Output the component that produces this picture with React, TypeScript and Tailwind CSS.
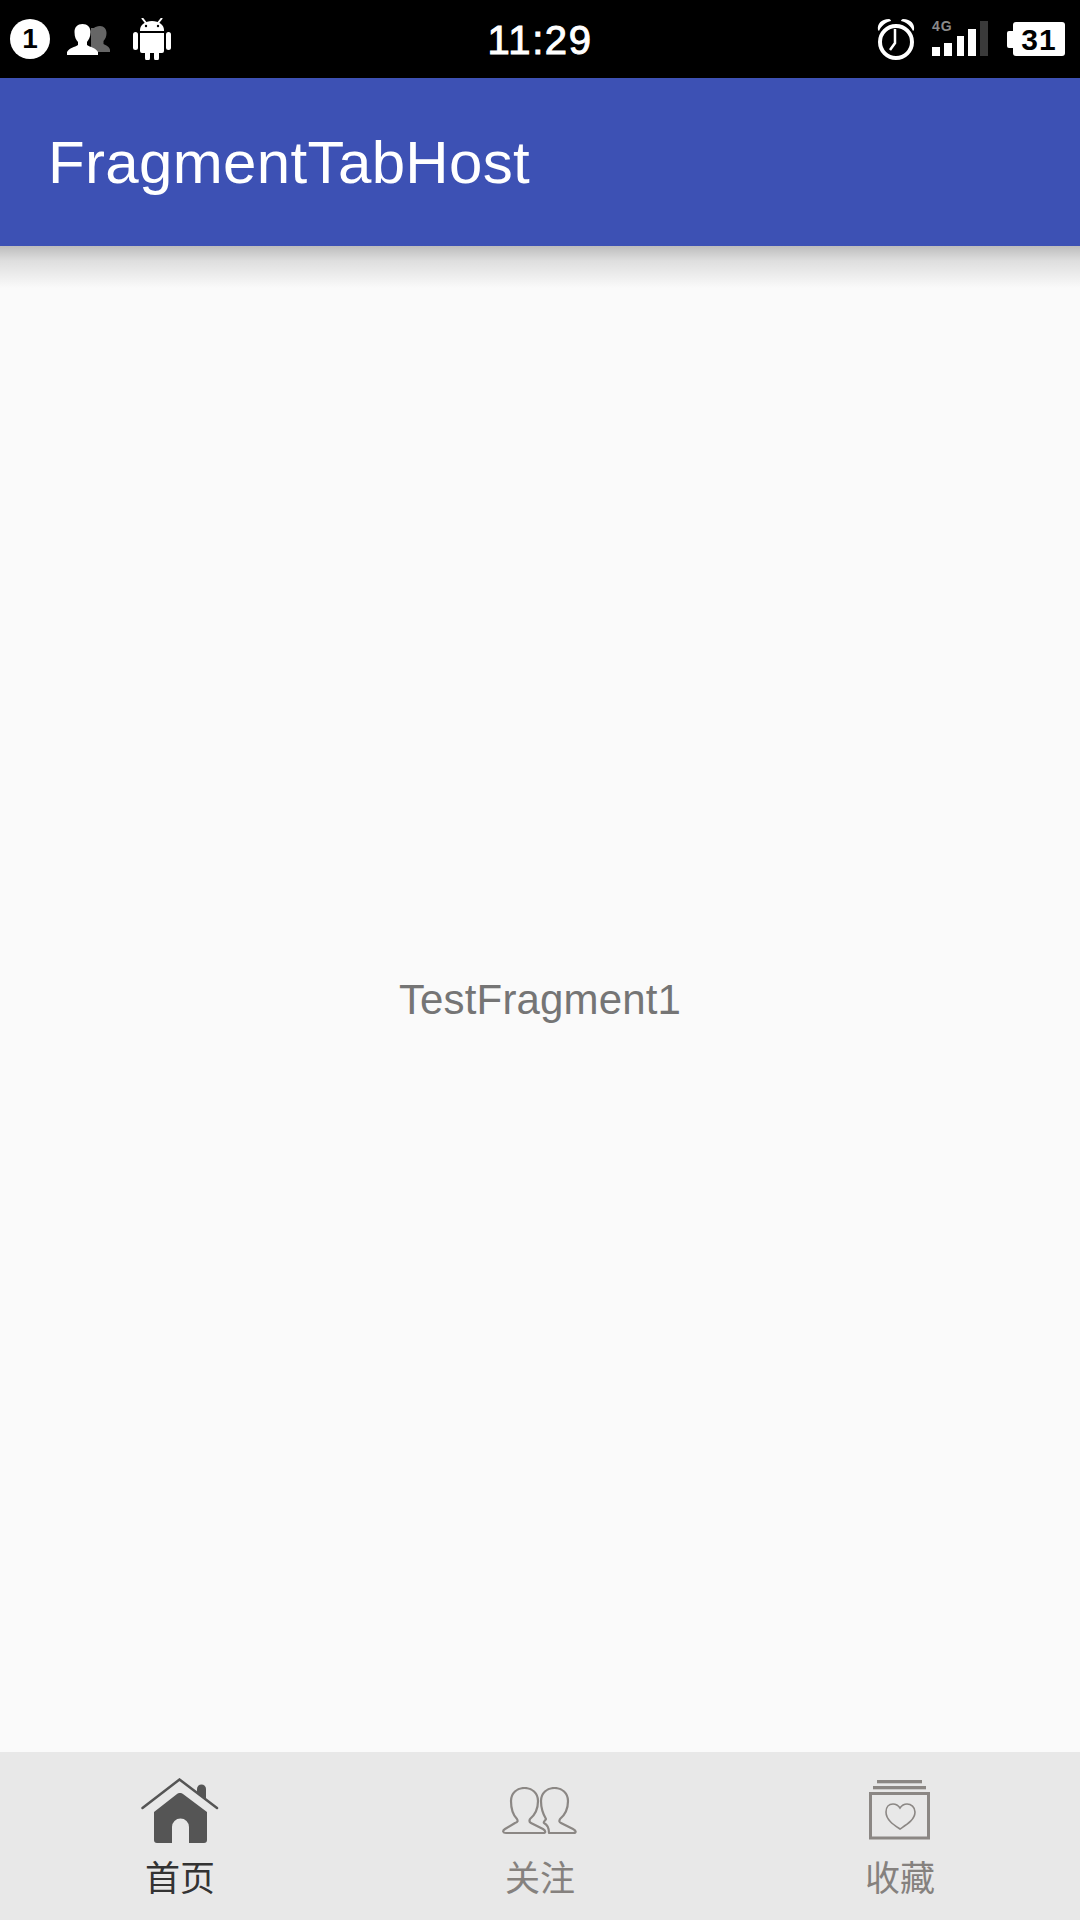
const sans = "font-['Liberation_Sans',Arial,sans-serif]";
const cjk = "font-['Noto_Sans_CJK_SC','Noto_Sans_CJK_JP',sans-serif]";

function People() {
  return (
    <svg width="44" height="32" viewBox="0 0 44 32">
      <path fill="#666" d="M33 3c4 0 6.500 3 6.500 7 0 3-1 6-3 8v3c2 1 6.500 3 6.500 6v2H24V5h3c1-1 3-2 6-2z" />
      <path fill="#fff" d="M15.500 1c5 0 8 3 8 8 0 5-2 8-3.500 10v3c3 2 9 3 11 7v3H0v-3c2-4 8-5 11-7v-3c-2-2-3.500-5-3.500-10 0-5 3-8 8-8z" />
    </svg>
  );
}

function Android() {
  return (
    <svg width="38" height="42" viewBox="0 0 38 42">
      <path stroke="#fff" strokeWidth="2" d="M9 0l4 5M29 0l-4 5" />
      <path fill="#fff" d="M7 12C7 7 12 3 19 3s12 4 12 9v1H7z" />
      <circle cx="13" cy="8" r="1.200" fill="#000" />
      <circle cx="25" cy="8" r="1.200" fill="#000" />
      <path fill="#fff" d="M7 15h24v18a2 2 0 0 1-2 2h-3v5a2.500 2.500 0 0 1-5 0v-5h-4v5a2.500 2.500 0 0 1-5 0v-5H9a2 2 0 0 1-2-2z" />
      <rect x="0" y="14" width="5" height="18" rx="2.500" fill="#fff" />
      <rect x="33" y="14" width="5" height="18" rx="2.500" fill="#fff" />
    </svg>
  );
}

function Alarm() {
  return (
    <svg width="38" height="42" viewBox="0 0 38 42">
      <circle cx="19" cy="24" r="16" fill="none" stroke="#fff" strokeWidth="4" />
      <path fill="#fff" d="M1 12C0 6 4 1 12 1c1 0 2 1 2 2-5 1-10 5-12 10zM37 12c1-6-3-11-11-11-1 0-2 1-2 2 5 1 10 5 12 10z" />
      <path fill="none" stroke="#fff" strokeWidth="2.500" d="M18 11v14l-5 7" />
    </svg>
  );
}

function Signal() {
  return (
    <div className="relative w-[56px] h-[36px]">
      <span className={`absolute left-0 top-[-2px] text-[14px] leading-[14px] font-bold tracking-[1px] text-[#8a8a8a] ${sans}`}>4G</span>
      <svg className="absolute left-0 top-0" width="56" height="36" viewBox="0 0 56 36">
        <rect x="0" y="26" width="8" height="9" fill="#fff" />
        <rect x="12" y="22" width="8" height="13" fill="#fff" />
        <rect x="25" y="15" width="7" height="20" fill="#fff" />
        <rect x="36" y="8" width="8" height="27" fill="#fff" />
        <rect x="48" y="0" width="8" height="35" fill="#3a3a3a" />
      </svg>
    </div>
  );
}

function Battery() {
  return (
    <div className="flex items-center">
      <div className="w-[6px] h-[17px] bg-white rounded-l-[2px]" />
      <div className={`w-[52px] h-[34px] bg-white rounded-[3px] flex items-center justify-center text-black text-[30px] font-bold tracking-[1px] ${sans}`}>31</div>
    </div>
  );
}

function HomeIcon() {
  return (
    <svg width="78" height="66" viewBox="0 0 78 66">
      <path fill="none" stroke="#555" strokeWidth="2.500" strokeLinecap="round" d="M1.500 30 38.500 1.500 76 30" />
      <path fill="#555" d="M56 14v-3a4.500 4.500 0 0 1 9 0v11z" />
      <path fill="#555" d="M39 15a4 4 0 0 1 3 1L66 34v28a3 3 0 0 1-3 3H48V49a8 8 0 0 0-17 0v16H16a3 3 0 0 1-3-3V34l23-18a4 4 0 0 1 3-1z" />
    </svg>
  );
}

function FollowIcon() {
  return (
    <svg width="76" height="48" viewBox="0 0 76 48">
      <g fill="none" stroke="#8b8784" strokeWidth="2.200" strokeLinejoin="round">
        <path d="M15 32C10 27 9 20 9 14 9 6 15 1 22.500 1 30 1 36 6 36 14 36 20 34 27 28 32 27 34 27 35 29 36L41 42C44 44 44 46 41 46L4 46C1 46 0 44 3 42L13 36C16 35 16 34 15 32Z" />
        <path d="M44 32C41 27 39 20 39 14 39 6 45 1 52.500 1 60 1 66 6 66 14 66 20 64 27 58 32 57 34 57 35 59 36L71 42C75 44 74 46 71 46L47 46C47 42 46 38 42 36 41 35 43 34 44 32Z" />
      </g>
    </svg>
  );
}

function FavIcon() {
  return (
    <svg width="62" height="60" viewBox="0 0 62 60">
      <rect x="8" y="0" width="45" height="3.300" fill="#8b8784" />
      <rect x="4" y="6" width="53" height="3.300" fill="#8b8784" />
      <rect x="1.500" y="13.500" width="58" height="44.500" fill="none" stroke="#8b8784" strokeWidth="3" />
      <path fill="none" stroke="#8b8784" strokeWidth="1.600" d="M31 49c-6-4-14-9-14-17 0-5 3-8 7-8 3 0 5 1 7 4 2-3 4-4 7-4 4 0 8 3 8 8 0 8-9 13-15 17z" />
    </svg>
  );
}

function Tab({ icon, label, color, iconTop }: { icon: React.ReactNode; label: string; color: string; iconTop: string }) {
  return (
    <div className="flex flex-col items-center">
      <div className="h-[66px] flex items-start mt-[26px]">
        <div className={iconTop}>{icon}</div>
      </div>
      <span className={`mt-[12px] text-[35px] leading-[40px] ${cjk} ${color}`}>{label}</span>
    </div>
  );
}

export default function App() {
  return (
    <div className={`w-[1080px] h-[1920px] flex flex-col bg-[#fafafa] ${sans}`}>
      <div className="h-[78px] bg-black grid grid-cols-[1fr_auto_1fr] items-center text-white shrink-0">
        <div className="flex items-center pl-[10px]">
          <div className={`w-[40px] h-[40px] rounded-full bg-white flex items-center justify-center text-black text-[28px] font-bold ${sans}`}>1</div>
          <div className="ml-[17px]"><People /></div>
          <div className="ml-[22px]"><Android /></div>
        </div>
        <div className="pt-[2px] text-[40px] leading-[44px] [-webkit-text-stroke:1px_white] tracking-[1.6px]">11:29</div>
        <div className="flex items-center justify-end pr-[15px]">
          <Alarm />
          <div className="ml-[17px]"><Signal /></div>
          <div className="ml-[19px]"><Battery /></div>
        </div>
      </div>
      <div className="h-[168px] bg-[#3d51b4] flex items-center pl-[48px] pt-[2px] text-white text-[60px] tracking-[0.35px] shrink-0">
        FragmentTabHost
      </div>
      <div className="relative flex-1 flex items-center justify-center bg-[#fafafa]">
        <div className="absolute top-0 left-0 right-0 h-[42px] bg-gradient-to-b from-[#bdbdbd] via-[#dedede] via-35% to-[#fafafa]" />
        <span className="text-[42px] tracking-[0.15px] text-[#757575]">TestFragment1</span>
      </div>
      <div className="h-[168px] bg-[#e8e8e8] grid grid-cols-3 shrink-0">
        <Tab icon={<HomeIcon />} label="首页" color="text-[#333333]" iconTop="mt-0" />
        <Tab icon={<FollowIcon />} label="关注" color="text-[#85817e]" iconTop="mt-[9px]" />
        <Tab icon={<FavIcon />} label="收藏" color="text-[#85817e]" iconTop="mt-[2px]" />
      </div>
    </div>
  );
}
